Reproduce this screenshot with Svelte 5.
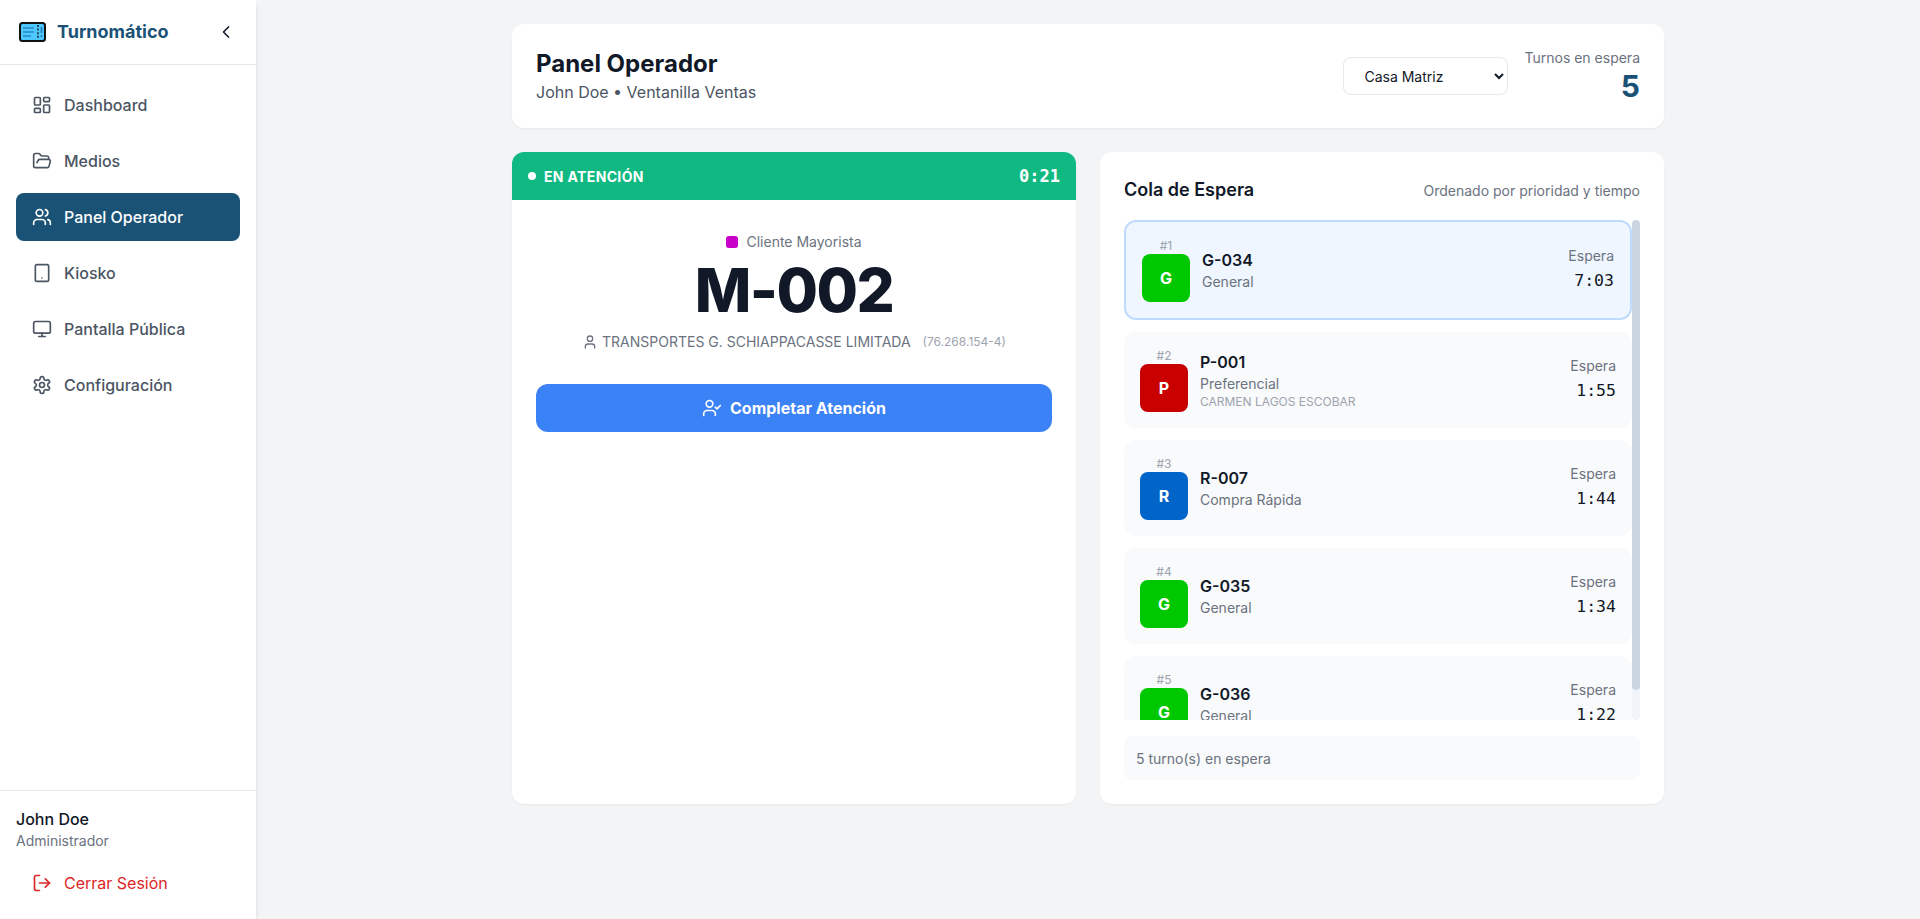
<script lang="ts">
  const nav = [
    { id: 'dashboard', label: 'Dashboard' },
    { id: 'medios', label: 'Medios' },
    { id: 'operador', label: 'Panel Operador', active: true },
    { id: 'kiosko', label: 'Kiosko' },
    { id: 'pantalla', label: 'Pantalla Pública' },
    { id: 'config', label: 'Configuración' }
  ];

  const queue = [
    { pos: 1, code: 'G-034', letter: 'G', color: '#00c800', type: 'General', wait: '7:03', first: true },
    { pos: 2, code: 'P-001', letter: 'P', color: '#c80000', type: 'Preferencial', client: 'CARMEN LAGOS ESCOBAR', wait: '1:55' },
    { pos: 3, code: 'R-007', letter: 'R', color: '#0064c8', type: 'Compra Rápida', wait: '1:44' },
    { pos: 4, code: 'G-035', letter: 'G', color: '#00c800', type: 'General', wait: '1:34' },
    { pos: 5, code: 'G-036', letter: 'G', color: '#00c800', type: 'General', wait: '1:22' }
  ];
</script>

<div class="app">
  <aside class="sidebar">
    <div class="brand">
      <div class="brand-left">
        <svg class="logo" width="27" height="20" viewBox="0 0 27 20">
          <rect x="1" y="1" width="25" height="18" rx="2.5" fill="#4dc9ff" stroke="#111" stroke-width="2" />
          <path d="M4 6h11M4 10h11M4 14h8" stroke="#2a86c8" stroke-width="1.3" fill="none" />
          <path d="M19 3v14" stroke="#111" stroke-width="1.4" stroke-dasharray="2 1.6" fill="none" />
          <path d="M22.5 5v6M22.5 13v2" stroke="#2a86c8" stroke-width="2" fill="none" />
        </svg>
        <span class="brand-name">Turnomático</span>
      </div>
      <svg class="icon chevron" viewBox="0 0 24 24"><path d="m15 18-6-6 6-6" /></svg>
    </div>

    <nav class="nav">
      {#each nav as item}
        <a class="nav-item" class:active={item.active} href="#{item.id}">
          <svg class="icon" viewBox="0 0 24 24">
            {#if item.id === 'dashboard'}
              <rect x="3" y="3" width="7" height="9" rx="1" /><rect x="14" y="3" width="7" height="5" rx="1" /><rect x="14" y="12" width="7" height="9" rx="1" /><rect x="3" y="16" width="7" height="5" rx="1" />
            {:else if item.id === 'medios'}
              <path d="m6 14 1.5-2.9A2 2 0 0 1 9.24 10H20a2 2 0 0 1 1.94 2.5l-1.54 6a2 2 0 0 1-1.95 1.5H4a2 2 0 0 1-2-2V5a2 2 0 0 1 2-2h3.9a2 2 0 0 1 1.69.9l.81 1.2a2 2 0 0 0 1.67.9H18a2 2 0 0 1 2 2v2" />
            {:else if item.id === 'operador'}
              <path d="M16 21v-2a4 4 0 0 0-4-4H6a4 4 0 0 0-4 4v2" /><circle cx="9" cy="7" r="4" /><path d="M22 21v-2a4 4 0 0 0-3-3.87" /><path d="M16 3.13a4 4 0 0 1 0 7.75" />
            {:else if item.id === 'kiosko'}
              <rect x="4" y="2" width="16" height="20" rx="2" /><line x1="12" y1="18" x2="12.01" y2="18" />
            {:else if item.id === 'pantalla'}
              <rect x="2" y="3" width="20" height="14" rx="2" /><line x1="8" y1="21" x2="16" y2="21" /><line x1="12" y1="17" x2="12" y2="21" />
            {:else}
              <path d="M12.22 2h-.44a2 2 0 0 0-2 2v.18a2 2 0 0 1-1 1.73l-.43.25a2 2 0 0 1-2 0l-.15-.08a2 2 0 0 0-2.73.73l-.22.38a2 2 0 0 0 .73 2.73l.15.1a2 2 0 0 1 1 1.72v.51a2 2 0 0 1-1 1.74l-.15.09a2 2 0 0 0-.73 2.73l.22.38a2 2 0 0 0 2.73.73l.15-.08a2 2 0 0 1 2 0l.43.25a2 2 0 0 1 1 1.73V20a2 2 0 0 0 2 2h.44a2 2 0 0 0 2-2v-.18a2 2 0 0 1 1-1.73l.43-.25a2 2 0 0 1 2 0l.15.08a2 2 0 0 0 2.73-.73l.22-.39a2 2 0 0 0-.73-2.73l-.15-.08a2 2 0 0 1-1-1.74v-.5a2 2 0 0 1 1-1.74l.15-.09a2 2 0 0 0 .73-2.73l-.22-.38a2 2 0 0 0-2.73-.73l-.15.08a2 2 0 0 1-2 0l-.43-.25a2 2 0 0 1-1-1.73V4a2 2 0 0 0-2-2z" /><circle cx="12" cy="12" r="3" />
            {/if}
          </svg>
          <span>{item.label}</span>
        </a>
      {/each}
    </nav>

    <div class="side-footer">
      <div class="user-name">John Doe</div>
      <div class="user-role">Administrador</div>
      <button class="logout">
        <svg class="icon" viewBox="0 0 24 24"><path d="M9 21H5a2 2 0 0 1-2-2V5a2 2 0 0 1 2-2h4" /><polyline points="16 17 21 12 16 7" /><line x1="21" y1="12" x2="9" y2="12" /></svg>
        <span>Cerrar Sesión</span>
      </button>
    </div>
  </aside>

  <main class="main">
    <div class="content">
      <header class="card top">
        <div>
          <h1>Panel Operador</h1>
          <p class="sub">John Doe • Ventanilla Ventas</p>
        </div>
        <div class="top-right">
          <select class="branch">
            <option>Casa Matriz</option>
          </select>
          <div class="waiting">
            <div class="waiting-label">Turnos en espera</div>
            <div class="waiting-num">5</div>
          </div>
        </div>
      </header>

      <div class="columns">
        <section class="card current">
          <div class="status">
            <div class="status-left"><span class="dot"></span>EN ATENCIÓN</div>
            <div class="timer">0:21</div>
          </div>
          <div class="current-body">
            <div class="kind"><span class="swatch"></span>Cliente Mayorista</div>
            <div class="ticket">M-002</div>
            <div class="client">
              <svg class="icon small" viewBox="0 0 24 24"><path d="M19 21v-2a4 4 0 0 0-4-4H9a4 4 0 0 0-4 4v2" /><circle cx="12" cy="7" r="4" /></svg>
              <span>TRANSPORTES G. SCHIAPPACASSE LIMITADA</span>
              <span class="rut">(76.268.154-4)</span>
            </div>
            <button class="complete">
              <svg class="icon" viewBox="0 0 24 24"><path d="M16 21v-2a4 4 0 0 0-4-4H6a4 4 0 0 0-4 4v2" /><circle cx="9" cy="7" r="4" /><polyline points="16 11 18 13 22 9" /></svg>
              Completar Atención
            </button>
          </div>
        </section>

        <section class="card queue">
          <div class="queue-head">
            <h2>Cola de Espera</h2>
            <span>Ordenado por prioridad y tiempo</span>
          </div>
          <div class="list-wrap">
            <div class="list">
              {#each queue as t}
                <div class="row" class:first={t.first}>
                  <div class="row-left">
                    <div class="badge-col">
                      <span class="pos">#{t.pos}</span>
                      <span class="badge" style="background: {t.color}">{t.letter}</span>
                    </div>
                    <div class="info">
                      <div class="code">{t.code}</div>
                      <div class="type">{t.type}</div>
                      {#if t.client}<div class="row-client">{t.client}</div>{/if}
                    </div>
                  </div>
                  <div class="wait">
                    <div class="wait-label">Espera</div>
                    <div class="wait-time">{t.wait}</div>
                  </div>
                </div>
              {/each}
            </div>
            <div class="track"><div class="thumb"></div></div>
          </div>
          <div class="queue-foot">5 turno(s) en espera</div>
        </section>
      </div>
    </div>
  </main>
</div>

<style>
  :global(body) {
    margin: 0;
    font-family: Inter, "Liberation Sans", sans-serif;
    background: #f3f4f6;
  }

  .app {
    display: flex;
    height: 919px;
    overflow: hidden;
    background: #f3f4f6;
  }

  .icon {
    width: 20px;
    height: 20px;
    flex: none;
    fill: none;
    stroke: currentColor;
    stroke-width: 2;
    stroke-linecap: round;
    stroke-linejoin: round;
  }
  .icon.small {
    width: 16px;
    height: 16px;
  }

  /* sidebar */
  .sidebar {
    width: 256px;
    flex: none;
    display: flex;
    flex-direction: column;
    background: #fff;
    box-shadow: 0 4px 6px -1px rgba(0, 0, 0, 0.1), 0 2px 4px -2px rgba(0, 0, 0, 0.1);
  }
  .brand {
    height: 65px;
    box-sizing: border-box;
    border-bottom: 1px solid #e5e7eb;
    display: flex;
    align-items: center;
    justify-content: space-between;
    padding: 0 20px 1px 19px;
  }
  .brand-left {
    display: flex;
    align-items: center;
    gap: 11px;
  }
  .brand-name {
    font-size: 18px;
    font-weight: 700;
    color: #1a5276;
  }
  .chevron {
    color: #111827;
  }
  .nav {
    flex: 1;
    display: flex;
    flex-direction: column;
    gap: 8px;
    padding: 16px 16px 0;
  }
  .nav-item {
    height: 48px;
    display: flex;
    align-items: center;
    gap: 12px;
    padding: 0 16px;
    border-radius: 8px;
    font-size: 16px;
    font-weight: 500;
    color: #4b5563;
    text-decoration: none;
  }
  .nav-item.active {
    background: #1a5276;
    color: #fff;
  }
  .side-footer {
    border-top: 1px solid #e5e7eb;
    padding: 16px 16px 12px;
  }
  .user-name {
    font-size: 16px;
    line-height: 24px;
    font-weight: 500;
    color: #111827;
  }
  .user-role {
    font-size: 14px;
    line-height: 20px;
    color: #6b7280;
  }
  .logout {
    width: 100%;
    height: 48px;
    margin-top: 8px;
    display: flex;
    align-items: center;
    gap: 12px;
    padding: 0 16px;
    border: none;
    background: none;
    font: inherit;
    font-size: 16px;
    color: #dc2626;
  }

  /* main */
  .main {
    flex: 1;
    padding: 24px;
  }
  .content {
    width: 1152px;
    margin: 0 auto;
    display: flex;
    flex-direction: column;
    gap: 24px;
  }
  .card {
    background: #fff;
    border-radius: 12px;
    box-shadow: 0 1px 2px rgba(0, 0, 0, 0.05);
  }
  .top {
    height: 104px;
    box-sizing: border-box;
    padding: 0 24px;
    display: flex;
    align-items: center;
    justify-content: space-between;
  }
  h1 {
    margin: 0;
    font-size: 24px;
    line-height: 32px;
    font-weight: 700;
    color: #111827;
  }
  .sub {
    margin: 0;
    font-size: 16px;
    line-height: 24px;
    color: #4b5563;
  }
  .top-right {
    display: flex;
    align-items: center;
    gap: 16px;
  }
  .branch {
    width: 165px;
    height: 38px;
    padding: 0 12px 0 16px;
    border: 1px solid #e5e7eb;
    border-radius: 8px;
    background: #fff;
    font-family: inherit;
    font-size: 14px;
    color: #111827;
  }
  .waiting {
    text-align: right;
  }
  .waiting-label {
    font-size: 14px;
    line-height: 20px;
    color: #6b7280;
  }
  .waiting-num {
    font-size: 30px;
    line-height: 36px;
    font-weight: 700;
    color: #1a5276;
  }

  .columns {
    display: grid;
    grid-template-columns: 1fr 1fr;
    gap: 24px;
  }

  /* current ticket */
  .current {
    overflow: hidden;
  }
  .status {
    height: 48px;
    padding: 0 16px;
    display: flex;
    align-items: center;
    justify-content: space-between;
    background: #10b981;
    color: #fff;
  }
  .status-left {
    display: flex;
    align-items: center;
    gap: 8px;
    font-size: 14px;
    font-weight: 700;
    letter-spacing: 0.35px;
  }
  .dot {
    width: 8px;
    height: 8px;
    border-radius: 50%;
    background: #fff;
  }
  .timer {
    font-family: "DejaVu Sans Mono", monospace;
    font-size: 17px;
    font-weight: 700;
  }
  .current-body {
    padding: 32px 24px 24px;
    display: flex;
    flex-direction: column;
    align-items: center;
  }
  .kind {
    display: flex;
    align-items: center;
    gap: 8px;
    font-size: 14px;
    line-height: 20px;
    color: #6b7280;
  }
  .swatch {
    width: 12px;
    height: 12px;
    border-radius: 3px;
    background: #c800c8;
  }
  .ticket {
    margin-top: 8px;
    font-size: 60px;
    line-height: 60px;
    font-weight: 800;
    letter-spacing: -1.5px;
    color: #111827;
  }
  .client {
    margin-top: 12px;
    display: flex;
    align-items: center;
    gap: 4px;
    font-size: 14px;
    line-height: 20px;
    color: #6b7280;
  }
  .rut {
    margin-left: 8px;
    font-size: 12px;
    color: #9ca3af;
  }
  .complete {
    width: 100%;
    height: 48px;
    margin-top: 32px;
    display: flex;
    align-items: center;
    justify-content: center;
    gap: 8px;
    border: none;
    border-radius: 12px;
    background: #3b82f6;
    color: #fff;
    font: inherit;
    font-size: 16px;
    font-weight: 700;
  }

  /* queue */
  .queue {
    padding: 24px;
  }
  .queue-head {
    display: flex;
    align-items: center;
    justify-content: space-between;
    margin-bottom: 16px;
    font-size: 14px;
    color: #6b7280;
  }
  h2 {
    margin: 0;
    font-size: 18px;
    line-height: 28px;
    font-weight: 600;
    color: #111827;
  }
  .list-wrap {
    display: flex;
    height: 500px;
  }
  .list {
    flex: 1;
    min-width: 0;
    overflow: hidden;
    display: flex;
    flex-direction: column;
    gap: 12px;
  }
  .track {
    width: 8px;
    flex: none;
    background: #f1f5f9;
    border-radius: 4px;
  }
  .thumb {
    height: 470px;
    background: #cbd5e1;
    border-radius: 4px;
  }
  .row {
    flex: none;
    display: flex;
    align-items: center;
    justify-content: space-between;
    padding: 16px;
    border-radius: 12px;
    background: #f9fafb;
  }
  .row.first {
    border: 2px solid #bfdbfe;
    background: #eff6ff;
  }
  .row-left {
    display: flex;
    align-items: center;
    gap: 12px;
  }
  .badge-col {
    display: flex;
    flex-direction: column;
    align-items: center;
  }
  .pos {
    font-size: 12px;
    line-height: 16px;
    color: #9ca3af;
  }
  .badge {
    width: 48px;
    height: 48px;
    border-radius: 8px;
    display: flex;
    align-items: center;
    justify-content: center;
    color: #fff;
    font-size: 16px;
    font-weight: 700;
  }
  .code {
    font-size: 16px;
    line-height: 24px;
    font-weight: 600;
    color: #111827;
  }
  .type {
    font-size: 14px;
    line-height: 20px;
    color: #6b7280;
  }
  .row-client {
    font-size: 12px;
    line-height: 16px;
    color: #9ca3af;
  }
  .wait {
    text-align: right;
  }
  .wait-label {
    font-size: 14px;
    line-height: 20px;
    color: #6b7280;
  }
  .wait-time {
    font-family: "DejaVu Sans Mono", monospace;
    font-size: 16.5px;
    line-height: 28px;
    padding-top: 1px;
    margin-bottom: -1px;
    color: #111827;
  }
  .queue-foot {
    margin-top: 16px;
    height: 44px;
    box-sizing: border-box;
    padding: 0 12px;
    display: flex;
    align-items: center;
    border-radius: 8px;
    background: #f9fafb;
    font-size: 14px;
    color: #6b7280;
  }
</style>
